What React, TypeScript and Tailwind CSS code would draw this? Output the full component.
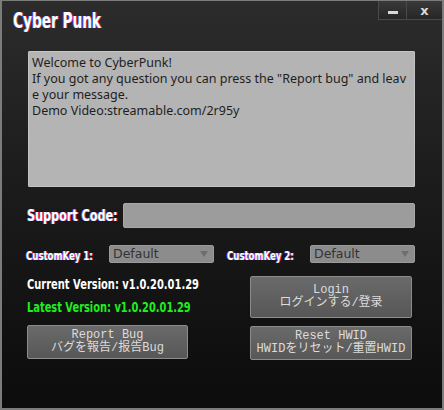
import React from "react";

const headFont = "font-['DejaVu_Sans',sans-serif] font-bold whitespace-nowrap inline-block origin-left";
const glitch = "[text-shadow:-1px_0_#2f5bff,1px_0_#ff3b5c]";
const btnFont = "font-['Liberation_Mono','Noto_Sans_CJK_JP',monospace]";

const WinButton = ({ children, className }: { children: React.ReactNode; className: string }) => (
  <div
    className={
      "h-[19px] flex items-center justify-center border-l border-b border-[#4a4a4a] bg-gradient-to-b from-[#3a3a3a] to-[#262626] " +
      className
    }
  >
    {children}
  </div>
);

const Select = () => (
  <div className="w-[105px] h-[18px] rounded-[2px] bg-[#8c8c8c] border border-[#9a9a9a] flex items-center justify-between pl-[3px] pr-[5px]">
    <span className="font-['DejaVu_Sans',sans-serif] text-[12.5px] leading-none text-[#333333]">Default</span>
    <svg width="8" height="6" viewBox="0 0 8 6">
      <path d="M0 0h8L4 6z" fill="#6e6e6e" />
    </svg>
  </div>
);

const ActionButton = ({ top, bottom, className = "" }: { top: string; bottom: string; className?: string }) => (
  <div
    className={
      "flex flex-col items-center justify-center rounded-[2px] border border-[#8c8c8c] bg-gradient-to-b from-[#6a6a6a] to-[#575757] text-[#dcdcdc] text-[12px] leading-[13px] " +
      btnFont +
      " " +
      className
    }
  >
    <span>{top}</span>
    <span>{bottom}</span>
  </div>
);

export default function App() {
  return (
    <div className="w-[444px] h-[410px] border-l-2 border-r-2 border-b-2 border-t border-[#7c7c7c] bg-gradient-to-b from-[#2c2c2c] via-[#1a1a1a] to-[#0c0c0c] flex flex-col">
      <div className="flex justify-between items-start h-[50px]">
        <div className="pl-[11px] pt-[6px] h-[50px]">
          <span className={"text-white text-[21px] leading-[28px] scale-x-[0.65] " + headFont + " " + glitch}>Cyber Punk</span>
        </div>
        <div className="flex">
          <WinButton className="w-[28px]">
            <div className="w-[10px] h-[3px] bg-[#d8d8d8] mt-[5px]" />
          </WinButton>
          <WinButton className="w-[36px]">
            <span className="text-[#d8d8d8] font-['DejaVu_Sans',sans-serif] font-bold text-[13px] leading-none">x</span>
          </WinButton>
        </div>
      </div>

      <div className="ml-[26px] w-[387px] h-[136px] bg-[#b4b4b4] border border-[#c4c4c4] rounded-[1px] px-[3px] pt-[3px] text-[#1e1e1e] font-['Noto_Sans',sans-serif] text-[12.5px] leading-[16px]">
        <div>Welcome to CyberPunk!</div>
        <div>If you got any question you can press the "Report bug" and leav</div>
        <div>e your message.</div>
        <div>Demo Video:streamable.com/2r95y</div>
      </div>

      <div className="flex items-center mt-[16px] ml-[25px]">
        <div className="w-[96px]">
          <span className={"text-white text-[16px] scale-x-[0.70] " + headFont + " " + glitch}>Support Code:</span>
        </div>
        <div className="w-[292px] h-[25px] bg-[#9c9c9c] border border-[#a8a8a8] rounded-[2px]" />
      </div>

      <div className="flex items-center mt-[14px] ml-[24px]">
        <div className="w-[83px]">
          <span className={"text-white text-[12px] scale-x-[0.715] " + headFont + " " + glitch}>CustomKey 1:</span>
        </div>
        <Select />
        <div className="w-[83px] ml-[13px]">
          <span className={"text-white text-[12px] scale-x-[0.715] " + headFont + " " + glitch}>CustomKey 2:</span>
        </div>
        <Select />
      </div>

      <div className="flex mt-[10px] ml-[25px]">
        <div className="w-[223px] flex flex-col">
          <div className="h-[18px] mt-[-5px]">
            <span className={"text-white text-[14.5px] leading-[18px] scale-x-[0.683] " + headFont}>Current Version: v1.0.20.01.29</span>
          </div>
          <div className="h-[18px] mt-[5px]">
            <span className={"text-[#1ef01e] text-[14.5px] leading-[18px] scale-x-[0.68] " + headFont}>Latest Version: v1.0.20.01.29</span>
          </div>
          <ActionButton top="Report Bug" bottom="バグを報告/报告Bug" className="w-[161px] h-[34px] mt-[13px]" />
        </div>
        <div className="flex flex-col">
          <ActionButton top="Login" bottom="ログインする/登录" className="w-[162px] h-[42px]" />
          <ActionButton top="Reset HWID" bottom="HWIDをリセット/重置HWID" className="w-[162px] h-[34px] mt-[8px]" />
        </div>
      </div>
    </div>
  );
}
